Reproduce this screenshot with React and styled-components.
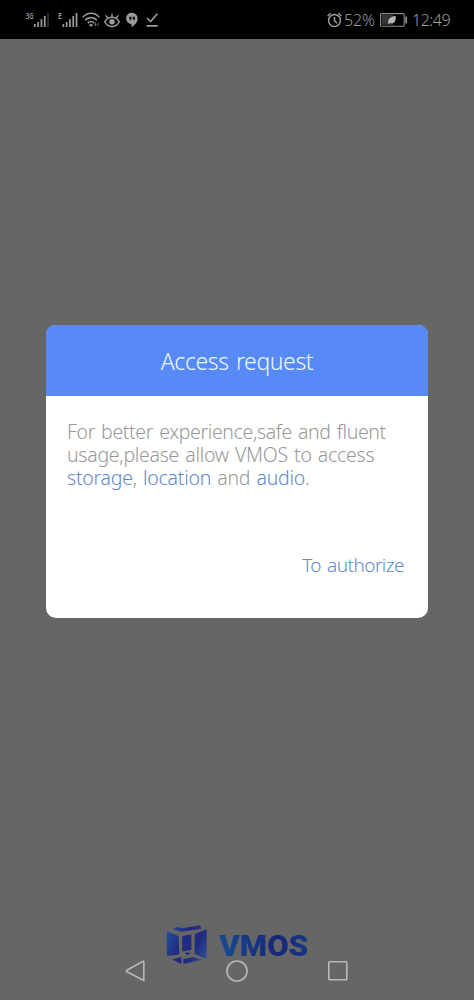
import React from 'react'
import styled, { createGlobalStyle } from 'styled-components'

const GlobalStyle = createGlobalStyle`
* {
    box-sizing: border-box;
}
body {
    margin: 0;
    background: #666666;
    font-family: "Noto Sans", "Open Sans", sans-serif;
}
`

const Screen = styled.div`
width: 474px;
height: 1000px;
display: flex;
flex-direction: column;
background: #666666;
overflow: hidden;
`

const StatusBar = styled.header`
height: 39px;
flex: none;
display: flex;
justify-content: space-between;
padding: 11px 24px 0 26px;
background: #000;
color: #9c9c9c;
`

const StatusGroup = styled.div`
display: flex;
align-items: flex-start;
height: 18px;
`

const Icon = styled.svg`
display: block;
flex: none;
overflow: visible;
margin-left: ${({ $gap }) => $gap || 0}px;
`

const StatusText = styled.span`
width: ${({ $width }) => $width}px;
margin-left: ${({ $gap }) => $gap || 0}px;
font-size: 16px;
font-weight: 300;
line-height: 19px;
letter-spacing: ${({ $spacing }) => $spacing || 0}px;
white-space: nowrap;
`

const Content = styled.main`
flex: 1;
display: flex;
justify-content: center;
align-items: flex-start;
padding-top: 286px;
`

const Dialog = styled.section`
width: 382px;
height: 293px;
display: flex;
flex-direction: column;
border-radius: 10px;
background: #fff;
`

const DialogTitle = styled.h1`
height: 71px;
margin: 0;
flex: none;
display: flex;
align-items: center;
justify-content: center;
border-radius: 9px 9px 0 0;
background: #588af7;
color: #eef6ff;
font-size: 23px;
font-weight: 300;
letter-spacing: -0.4px;
word-spacing: 1.8px;
`

const Message = styled.p`
margin: 0;
padding: 24px 0 0 21px;
color: #989898;
font-size: 19.5px;
font-weight: 300;
line-height: 23px;
`

const Line = styled.span`
display: block;
white-space: nowrap;
letter-spacing: ${({ $spacing }) => $spacing}px;
word-spacing: 1.4px;
`

const Link = styled.span`
color: #6288cb;
`

const Authorize = styled.button`
align-self: flex-end;
margin: 63px 24px 0 0;
padding: 0;
border: 0;
background: none;
color: #6288cb;
font-family: inherit;
font-size: 19px;
font-weight: 300;
line-height: 26px;
letter-spacing: -0.52px;
word-spacing: 1.5px;
`

const Footer = styled.footer`
height: 76px;
flex: none;
display: flex;
flex-direction: column;
`

const Brand = styled.div`
display: flex;
height: 36px;
flex: none;
padding-left: 165px;
`

const NavBar = styled.nav`
display: flex;
align-items: flex-start;
padding-left: 125px;
`

function Signal({ label, labelWidth, faint }) {
    return (
        <>
            <text x="0" y="7.5" fill="#9c9c9c" fontSize="8.5" fontWeight="600" textLength={labelWidth} lengthAdjust="spacingAndGlyphs">{label}</text>
            <g fill="#9c9c9c" transform={`translate(${labelWidth + 0.5} 0)`}>
                <rect x="0" y="13" width="1.7" height="3" />
                <rect x="3.3" y="11" width="1.7" height="5" />
                <rect x="6.6" y="8.2" width="1.7" height="7.8" />
                <rect x="9.9" y="5" width="1.7" height="11" />
                <rect x="13.2" y="2" width="1.7" height="14" opacity={faint ? 0.3 : 1} />
            </g>
        </>
    )
}

function StatusIcons() {
    return (
        <StatusGroup>
            <Icon width="24" height="17"><Signal label="3G" labelWidth={7.5} faint /></Icon>
            <Icon width="21" height="17" $gap={8}><Signal label="E" labelWidth={4} /></Icon>
            <Icon width="18" height="17" $gap={3} fill="none" stroke="#9c9c9c" strokeWidth="1.5">
                <path d="M.8 6.3C5.3 1 13 1 17.3 6.3M3.2 9.3c3.1-3.8 8.5-3.8 11.6 0M5.8 12.2c1.7-2.2 4.7-2.2 6.4 0" />
                <circle cx="9" cy="14.2" r="1.4" fill="#9c9c9c" stroke="none" />
                <path d="M13.5 11.5v3m-1-1 1 1 1-1M16 15v-3" strokeWidth=".7" />
            </Icon>
            <Icon width="16" height="17" $gap={4} fill="none" stroke="#9c9c9c" strokeWidth="1.4">
                <path d="M.7 10.8C4.2 4.8 11.8 4.8 15.3 10.8 11.8 17 4.2 17 .7 10.8Z" />
                <path d="M8 6.3V2.6M3.8 7.3 1.8 4.4M12.2 7.3 14.2 4.4" />
                <circle cx="8" cy="10.8" r="2" fill="#9c9c9c" />
            </Icon>
            <Icon width="12" height="17" $gap={6}>
                <path d="M6 1.8a5.6 5.6 0 0 1 5.6 5.7c0 3.7-2.8 6.9-6.1 8.6v-2.9A5.6 5.6 0 0 1 6 1.8Z" fill="#9c9c9c" />
                <path d="M3.1 5.8h2.4v2.4L4.3 9.5H3.5l.6-1.4h-1zM6.6 5.8H9v2.4L7.8 9.5H7l.6-1.4h-1z" fill="#151515" />
            </Icon>
            <Icon width="12" height="17" $gap={8} fill="none" stroke="#9c9c9c" strokeWidth="1.7">
                <path d="m1.2 7 3.4 3.5 6.7-7.7M.5 14.8h11.3" />
            </Icon>
        </StatusGroup>
    )
}

function StatusInfo() {
    return (
        <StatusGroup>
            <Icon width="16" height="17" fill="none" stroke="#9c9c9c" strokeWidth="1.5">
                <circle cx="7.5" cy="9.5" r="5.9" />
                <path d="M7.5 6v3.7l2.6 2.5M.6 5.2l3-3M14.4 5.2l-3-3" />
            </Icon>
            <StatusText $gap={1} $width={32} $spacing={-0.1}>52%</StatusText>
            <Icon width="28" height="17" $gap={4}>
                <rect x=".6" y="2.6" width="23.6" height="12.6" rx="1" fill="none" stroke="#8c8c8c" strokeWidth="1.1" />
                <rect x="2" y="4" width="11" height="9.8" fill="#363636" />
                <path d="M8.5 13c-1.3-4.8 1.7-7.3 7.2-8 .5 5.2-1.5 8.2-5.6 7l-1 1z" fill="#b5b5b5" />
                <rect x="25.3" y="5.5" width="1.8" height="7" fill="#8c8c8c" />
            </Icon>
            <StatusText $gap={4} $width={38} $spacing={-0.45}>12:49</StatusText>
        </StatusGroup>
    )
}

function Logo() {
    return (
        <Icon width="145" height="43" viewBox="0 0 145 43">
            <defs>
                <linearGradient id="word" x1="0" x2="1">
                    <stop offset="0" stopColor="#164b92" />
                    <stop offset=".3" stopColor="#173a87" />
                    <stop offset=".65" stopColor="#18267a" />
                    <stop offset="1" stopColor="#173684" />
                </linearGradient>
                <linearGradient id="cube" gradientUnits="userSpaceOnUse" x1="0" x2="42" y1="10" y2="32">
                    <stop offset="0" stopColor="#23509a" />
                    <stop offset=".4" stopColor="#212a82" />
                    <stop offset=".7" stopColor="#222a80" />
                    <stop offset="1" stopColor="#2a5292" />
                </linearGradient>
            </defs>
            <g fill="url(#cube)">
                <path d="m7.2 5.2 5.8-2.4 4.2 1.5L34 1.4q1.3-.2 1.6 1l.6 2.6-6.8.8-13 2z" />
                <path d="m2.7 7.3 10.2 4.4q.8.4.8 1.2l.5 17.6-11 1.2q-1.4.1-1.4-1.2V8q0-1 .9-.7z" />
                <path d="m30.3 9.8 10.4-4.2q1-.3 1 .7v27.5q0 1-1 .7l-10.2-4-1-1.3.3-18.5q0-.6.5-.9z" />
                <path d="m17.2 12 9.2-1.5v15.6l-9.2 1.4z" />
                <path d="m7.2 35.6 9.2-2.6v7z" />
                <path d="m18.4 34.9 9.9-1.7 8.8 2.6-18.7 4.2z" />
            </g>
            <ellipse cx="22.5" cy="29.4" rx="2.4" ry="1" fill="#20257c" />
            <text x="54" y="31.9" fill="url(#word)" fontFamily="Roboto, Liberation Sans, sans-serif" fontSize="29.6" fontWeight="900" textLength="89" lengthAdjust="spacingAndGlyphs">VMOS</text>
        </Icon>
    )
}

export default function App() {
    return (
        <Screen>
            <GlobalStyle />
            <StatusBar>
                <StatusIcons />
                <StatusInfo />
            </StatusBar>
            <Content>
                <Dialog>
                    <DialogTitle>Access request</DialogTitle>
                    <Message>
                        <Line $spacing={-0.36}>For better experience,safe and fluent</Line>
                        <Line $spacing={-0.28}>usage,please allow VMOS to access</Line>
                        <Line $spacing={-0.26}><Link>storage</Link>, <Link>location</Link> and <Link>audio</Link>.</Line>
                    </Message>
                    <Authorize>To authorize</Authorize>
                </Dialog>
            </Content>
            <Footer>
                <Brand><Logo /></Brand>
                <NavBar>
                    <Icon width="20" height="22" fill="none" stroke="#b9b9b9" strokeWidth="1.6">
                        <path d="M18.8 1.7v18.8L1.8 11.7q-1.2-.7 0-1.4L17.5 1.5q1.3-.7 1.3.5Z" />
                    </Icon>
                    <Icon width="22" height="22" $gap={81} fill="none" stroke="#b9b9b9" strokeWidth="1.6">
                        <circle cx="11" cy="11" r="10" />
                    </Icon>
                    <Icon width="20" height="22" $gap={80} fill="none" stroke="#b9b9b9" strokeWidth="1.6">
                        <rect x=".8" y="1.8" width="18" height="18" rx=".8" />
                    </Icon>
                </NavBar>
            </Footer>
        </Screen>
    )
}
